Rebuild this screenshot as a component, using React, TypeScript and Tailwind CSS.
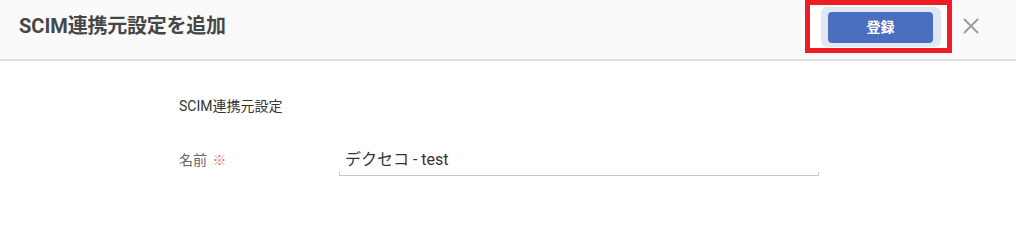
export default function App() {
  return (
    <div className="w-[1016px] h-[220px] bg-white font-['Roboto','Noto_Sans_CJK_JP',sans-serif]">
      <div className="flex items-center justify-between h-[61px] pb-[7px] pl-[19px] pr-[37px] bg-[#fafafa] border-b-2 border-[#e0e0e0]">
        <h1 className="text-[20px] font-bold text-[#474747] leading-[28px]">
          SCIM<span className="tracking-[-0.25px]">連携元設定を追加</span>
        </h1>
        <div className="flex items-center gap-[11px]">
          <div className="w-[147px] h-[53px] border-[5px] border-[#ee1c25] bg-white pl-[11px] pr-[6px] pt-[2px] pb-[1px]">
            <div className="px-[7px] pt-[5px] pb-[4px] rounded-[6px] bg-[#e1e8f3]">
              <button className="w-[105px] h-[31px] rounded-[4px] bg-[#4a6fc0] text-white text-[14px] font-bold leading-none">
                登録
              </button>
            </div>
          </div>
          <button className="w-[16px] h-[16px] text-[#9a9a9a]">
            <svg viewBox="0 0 16 16" width="16" height="16" fill="none" stroke="currentColor" strokeWidth="1.8">
              <path d="M1 1L15 15M15 1L1 15" />
            </svg>
          </button>
        </div>
      </div>
      <div className="pl-[179px] pt-[35px]">
        <p className="text-[14px] leading-[20px] text-[#333]">SCIM連携元設定</p>
        <div className="flex items-start mt-[32px]">
          <div className="w-[160px] pt-[2px] text-[14px] leading-[20px] text-[#666]">
            名前 <span className="ml-[2px] text-[#e57373]">※</span>
          </div>
          <div className="w-[480px]">
            <div className="pl-[6px] text-[16px] leading-[24px] text-[#333]">デクセコ - test</div>
            <div className="h-[4px] border-x border-b border-[#c8c8c8]" />
          </div>
        </div>
      </div>
    </div>
  );
}
